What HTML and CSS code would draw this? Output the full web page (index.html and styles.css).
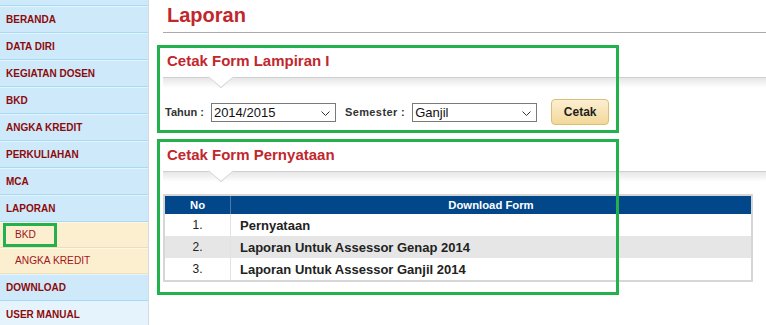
FILE: index.html
```html
<!DOCTYPE html>
<html lang="id">
  <head>
    <meta charset="UTF-8" />
    <meta name="viewport" content="width=device-width, initial-scale=1.0" />
    <title>Laporan</title>
    <link rel="stylesheet" href="styles.css">
  </head>
  <body>
    <div class="wrap">
      <div class="sidebar">
        <div class="menu-top"></div>
        <a class="menu" href="#">BERANDA</a>
        <a class="menu" href="#">DATA DIRI</a>
        <a class="menu" href="#">KEGIATAN DOSEN</a>
        <a class="menu" href="#">BKD</a>
        <a class="menu" href="#">ANGKA KREDIT</a>
        <a class="menu" href="#">PERKULIAHAN</a>
        <a class="menu" href="#">MCA</a>
        <a class="menu" href="#">LAPORAN</a>
        <a class="menu sub" href="#">BKD</a>
        <a class="menu sub" href="#">ANGKA KREDIT</a>
        <a class="menu" href="#">DOWNLOAD</a>
        <a class="menu hover" href="#">USER MANUAL</a>
        <div class="mark mark-bkd"></div>
      </div>

      <div class="main">
        <h1 class="page-title">Laporan</h1>

        <div class="section">
          <h2 class="sec-title">Cetak Form Lampiran I</h2>
          <div class="shade"></div>
          <form class="form-row">
            <label>Tahun :</label>
            <span class="select-box">
              <select class="sel-tahun">
                <option>2014/2015</option>
                <option>2013/2014</option>
              </select>
              <svg class="chev" width="9" height="5" viewBox="0 0 9 5"><path d="M0.5 0.5 L4.5 4.5 L8.5 0.5" fill="none" stroke="#333" stroke-width="1"/></svg>
            </span>
            <label class="lbl-sem">Semester :</label>
            <span class="select-box">
              <select class="sel-sem">
                <option>Ganjil</option>
                <option>Genap</option>
              </select>
              <svg class="chev" width="9" height="5" viewBox="0 0 9 5"><path d="M0.5 0.5 L4.5 4.5 L8.5 0.5" fill="none" stroke="#333" stroke-width="1"/></svg>
            </span>
            <button type="button" class="btn">Cetak</button>
          </form>
        </div>

        <div class="section second">
          <h2 class="sec-title">Cetak Form Pernyataan</h2>
          <div class="shade"></div>
          <table class="grid">
            <tr>
              <th class="col-no">No</th>
              <th>Download Form</th>
            </tr>
            <tr>
              <td class="col-no">1.</td>
              <td class="name">Pernyataan</td>
            </tr>
            <tr class="alt">
              <td class="col-no">2.</td>
              <td class="name">Laporan Untuk Assessor Genap 2014</td>
            </tr>
            <tr>
              <td class="col-no">3.</td>
              <td class="name">Laporan Untuk Assessor Ganjil 2014</td>
            </tr>
          </table>
        </div>

        <div class="mark mark-one"></div>
        <div class="mark mark-two"></div>
      </div>
    </div>
  </body>
</html>
```

FILE: styles.css
```css
body {
  margin: 0;
  font-family: "Liberation Sans", Arial, sans-serif;
  background: #fff;
  overflow: hidden;
}
.wrap {
  display: flex;
  height: 325px;
}

/* left menu */
.sidebar {
  position: relative;
  width: 148px;
  border-right: 1px solid #d3dbe0;
  background: #cde9fa;
  display: flex;
  flex-direction: column;
  overflow: hidden;
}
.menu-top {
  flex-shrink: 0;
  height: 5px;
  border-bottom: 1px solid #a9daf5;
}
.menu {
  display: block;
  flex-shrink: 0;
  height: 25px;
  line-height: 26px;
  padding-left: 6px;
  border-top: 1px solid #e4f4fd;
  border-bottom: 1px solid #a9daf5;
  color: #8e0a0a;
  font-size: 10px;
  font-weight: bold;
  text-decoration: none;
}
.menu.sub {
  height: 24px;
  line-height: 24px;
  padding-left: 15px;
  background: #fbefd0;
  border-top-color: #fdf7e8;
  border-bottom-color: #eedfb9;
  font-weight: normal;
  color: #a3141a;
  font-size: 10.2px;
}
.menu.hover {
  background: #e5f4fc;
}

/* content */
.main {
  position: relative;
  flex: 1;
  padding-left: 14px;
}
.page-title {
  margin: 0;
  height: 32px;
  line-height: 30px;
  padding-left: 4px;
  border-bottom: 1px solid #aaa;
  color: #c1272d;
  font-size: 20px;
}
.section {
  margin-top: 13px;
}
.section.second {
  margin-top: 15px;
}
.sec-title {
  position: relative;
  margin: 0;
  height: 31px;
  line-height: 30px;
  padding-left: 4px;
  border-bottom: 1px solid #cfcfcf;
  color: #c1272d;
  font-size: 15px;
}
.sec-title::after {
  content: "";
  position: absolute;
  left: 49px;
  bottom: -9px;
  width: 17px;
  height: 17px;
  background: #fff;
  border-right: 1px solid #d6d6d6;
  border-bottom: 1px solid #d6d6d6;
  transform: scaleY(0.88) rotate(45deg);
  z-index: 1;
}
.shade {
  height: 10px;
  background: linear-gradient(#e6e6e6, #fff);
}

.form-row {
  display: flex;
  align-items: center;
  height: 26px;
  margin: 0;
  padding-top: 11px;
  padding-left: 2px;
  font-size: 11px;
  font-weight: bold;
  color: #333;
}
.form-row label {
  margin-right: 7px;
}
.form-row .lbl-sem {
  margin-left: 9px;
  letter-spacing: 0.4px;
}
.select-box {
  position: relative;
  display: flex;
}
.form-row select {
  appearance: none;
  -webkit-appearance: none;
  height: 19px;
  border: 1px solid #7a7a7a;
  border-radius: 0;
  background: #fff;
  font-family: "Liberation Sans", Arial, sans-serif;
  font-size: 13px;
  color: #111;
  padding: 0 0 0 2px;
}
.chev {
  position: absolute;
  right: 6px;
  top: 8px;
  pointer-events: none;
}
.sel-tahun {
  width: 125px;
}
.sel-sem {
  width: 125px;
}
.btn {
  margin-left: 14px;
  width: 58px;
  height: 26px;
  border: 1px solid #dcbd76;
  border-radius: 4px;
  background: linear-gradient(#fcefd2, #f2d898);
  font-family: "Liberation Sans", Arial, sans-serif;
  font-size: 12px;
  font-weight: bold;
  color: #1e1e1e;
}

.grid {
  width: 590px;
  margin-top: 12px;
  border-collapse: collapse;
  border: 2px solid #d6d6d6;
  font-size: 12px;
}
.grid th {
  height: 18px;
  padding: 0;
  background: #02478a;
  color: #fff;
  font-size: 11.3px;
  font-weight: bold;
}
.grid th.col-no {
  border-right: 1px solid #4f7aa6;
}
.grid td {
  height: 22px;
  padding: 0;
  color: #222;
}
.grid td.col-no {
  width: 65px;
  text-align: center;
  border-right: 1px solid #e2e2e2;
}
.grid td.name {
  padding-left: 9px;
  font-size: 13px;
  font-weight: bold;
}
.grid tr.alt td {
  background: #e6e6e6;
}

/* green marker boxes */
.mark {
  position: absolute;
  box-sizing: border-box;
  border: 3px solid #22b14c;
  pointer-events: none;
}
.mark-bkd {
  left: 3px;
  top: 223px;
  width: 54px;
  height: 24px;
}
.mark-one {
  left: 8px;
  top: 45px;
  width: 462px;
  height: 88px;
}
.mark-two {
  left: 8px;
  top: 139px;
  width: 462px;
  height: 156px;
}
```
